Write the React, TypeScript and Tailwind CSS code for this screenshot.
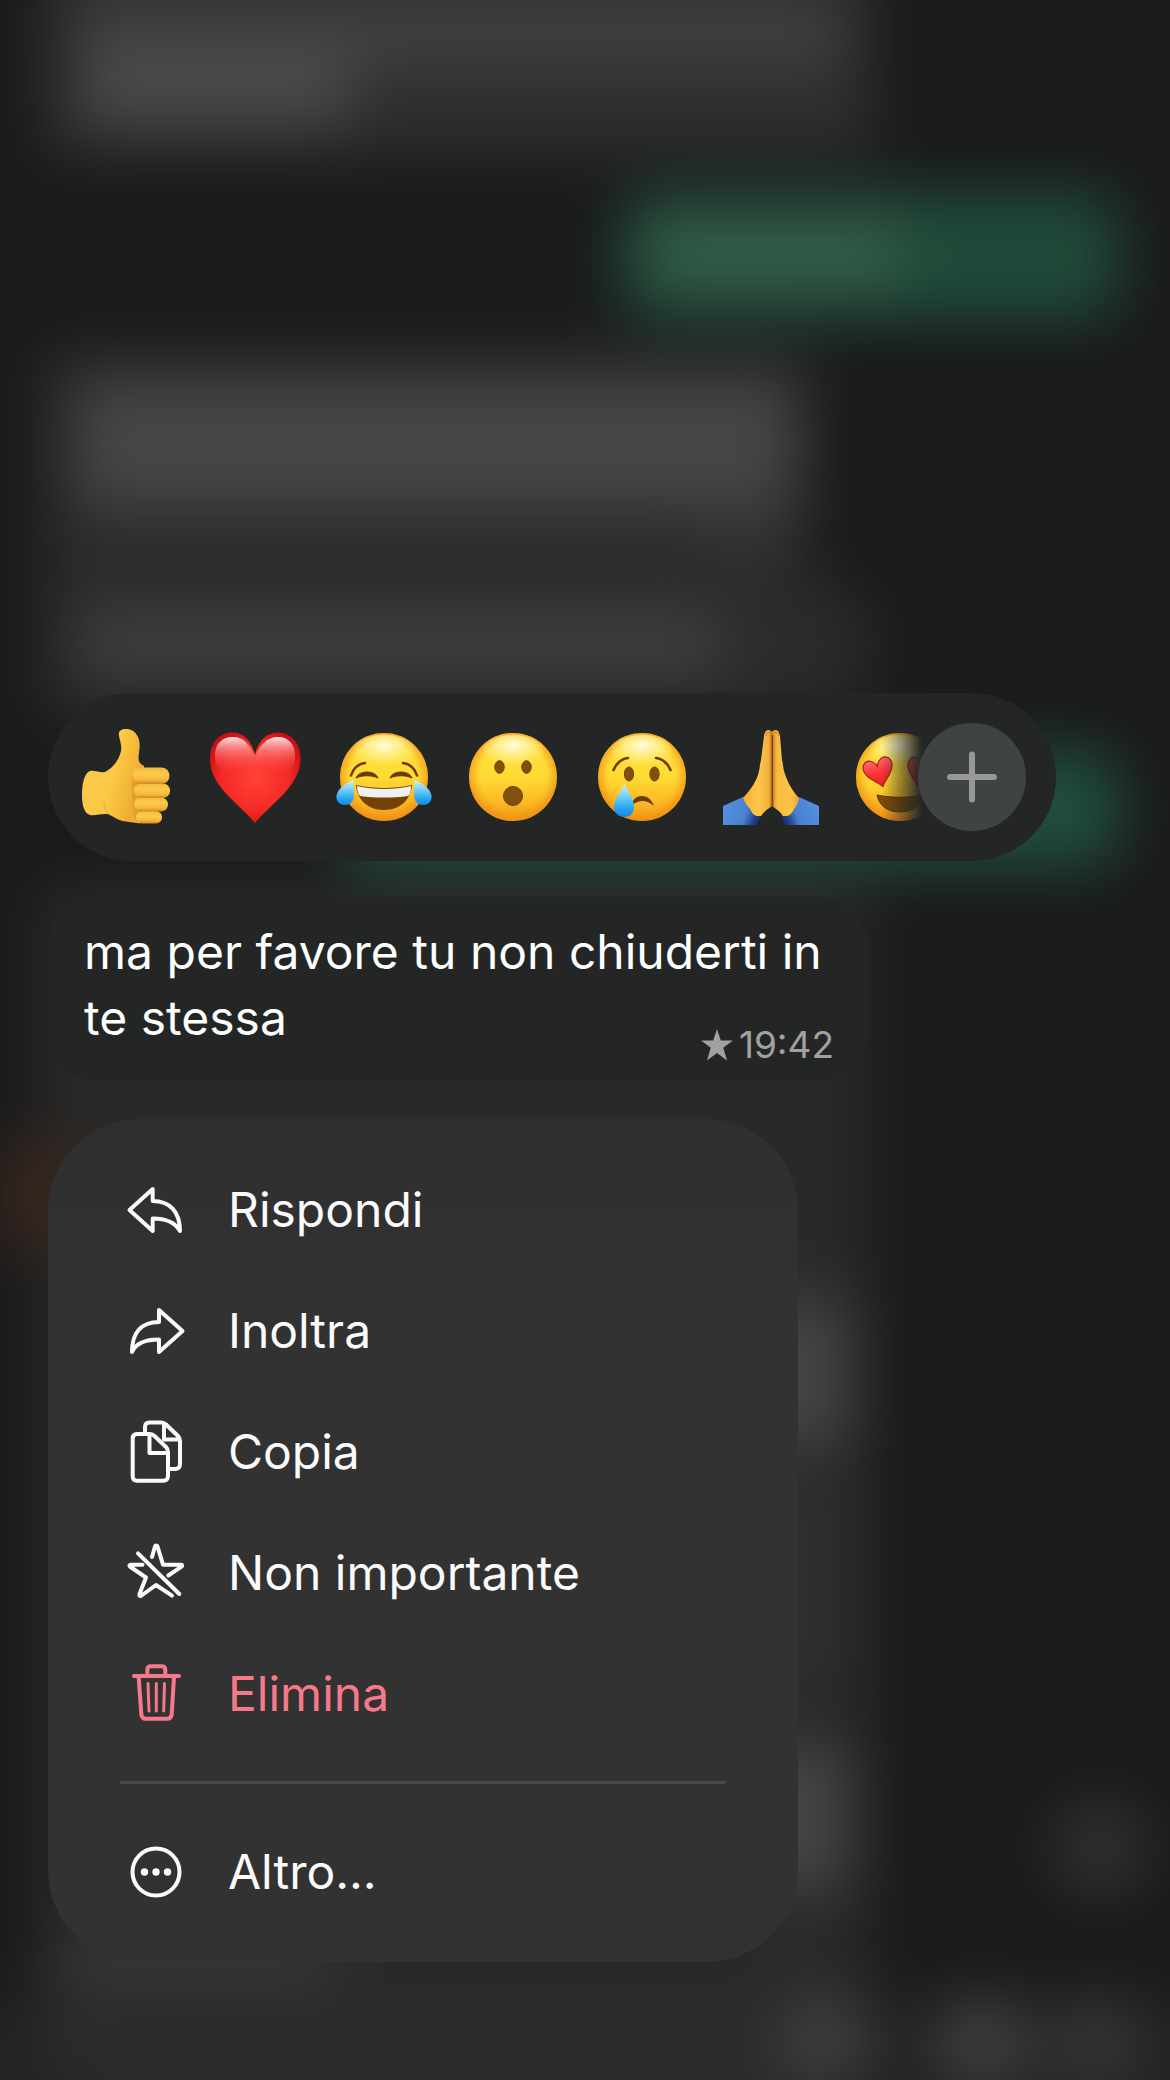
import type { ReactNode } from 'react';

const Face = ({ children }: { children: ReactNode }) => (
  <svg viewBox="0 0 96 96" className="size-24 overflow-visible" aria-hidden="true">
    <circle cx="48" cy="48" r="44" fill="url(#face)" />
    <circle cx="48" cy="48" r="44" fill="url(#faceEdge)" />
    <ellipse cx="48" cy="24" rx="31" ry="18" fill="url(#faceShine)" />
    {children}
  </svg>
);

const ThumbsUp = () => (
  <svg viewBox="0 0 96 96" className="size-24 overflow-visible" aria-hidden="true">
    <path
      d="M48 0C43 0 40 2 41 7C42 12 44 17 43 22C41 31 35 39 27 43C22 44 17 41 12 42C6 44 4 56 4 66C4 76 6 84 12 86C18 87 25 84 31 85.500C36 88 41 92 48 92.500L62 94.500L66 60L66 37C60 34 60 30 61 24C62 18 62 12 60 8C57 2 53 0 48 0Z"
      fill="url(#hand)"
    />
    <path d="M31 85C27 82 26 77 26 72" fill="none" stroke="#e5a32b" strokeWidth="1.500" opacity="0.5" />
    <path d="M55 42C53 54 55 60 54 68C54 76 56 86 58 92L66 92L66 42Z" fill="#dd982b" opacity="0.75" />
    <rect x="58" y="82" width="26" height="12.500" rx="6" fill="url(#finger)" />
    <rect x="56" y="68.500" width="34" height="14" rx="7" fill="url(#finger)" />
    <rect x="56" y="54.500" width="36" height="14.500" rx="7" fill="url(#finger)" />
    <rect x="54.500" y="38.500" width="37" height="16.500" rx="8" fill="url(#finger)" />
  </svg>
);

const Heart = () => (
  <svg viewBox="0 0 96 96" className="size-24 overflow-visible" aria-hidden="true">
    <path d="M48 25C44 11 36 3.500 25.500 3.500C12 3.500 3 14 3 29C3 42 8 51 15 60C25 72 38 82 48 94C58 82 71 72 81 60C88 51 93.500 42 93.500 29C93.500 14 84 3.500 71 3.500C60 3.500 52 11 48 25Z" fill="url(#heart)" />
    <path d="M48 27C43 16 37 8 26 8C14 8 7.500 16 8 28C8.500 36 12 43 18 48C34 42 62 42 78 48C84 43 88 36 88 28C88.500 16 82 8 71 8C60 8 53 16 48 27Z" fill="url(#heartShine)" />
  </svg>
);

const Joy = () => (
  <Face>
    <path d="M15 46.500C17 40 22 35 29 34M81 46.500C79 40 74 35 67 34" fill="none" stroke="#6d3c05" strokeWidth="2.500" strokeLinecap="round" />
    <path d="M20 49C23 41 39 41 42 49C35 46 27 46 20 49ZM54 49C57 41 73 41 76 49C69 46 61 46 54 49Z" fill="#6d3c05" stroke="#6d3c05" strokeLinejoin="round" />
    <path d="M20 56C38 60 58 60 76 56C75 70 65 81 48 81C31 81 21 70 20 56Z" fill="#714106" />
    <path d="M21 57C38 61 58 61 75 57C75 62 74 66 72 67C57 69 39 69 24 67C22 65 21 61 21 57Z" fill="#f1eff0" />
    <path d="M17.500 51C8 55 1 61 .500 67C0 73 4 76 9 76C15 76 18 71 18 65Z" fill="url(#tear)" />
    <path d="M78.500 51C88 55 95 61 95.500 67C96 73 92 76 87 76C81 76 78 71 78 65Z" fill="url(#tear)" />
  </Face>
);

const Surprised = () => (
  <Face>
    <g fill="#81500b" stroke="#6b3e07" strokeWidth="1">
      <ellipse cx="34.500" cy="38" rx="4.700" ry="6.300" />
      <ellipse cx="61.500" cy="38" rx="4.700" ry="6.300" />
      <circle cx="48" cy="67" r="9.500" />
    </g>
  </Face>
);

const Crying = () => (
  <Face>
    <path d="M19.500 41C22 35 27 30 34 29M76.500 41C74 35 69 30 62 29" fill="none" stroke="#6d3c05" strokeWidth="2.600" strokeLinecap="round" />
    <ellipse cx="35" cy="45" rx="4.600" ry="7" fill="#81500b" stroke="#6b3e07" />
    <ellipse cx="60.500" cy="45" rx="4.600" ry="7" fill="#81500b" stroke="#6b3e07" />
    <path d="M38 76C39 65 55 63 60 77C53 71 46 70 38 76Z" fill="#6d3c05" />
    <path d="M30.500 54C34 64 40 69 40 78C40 84 36 88 30.500 88C25 88 20 84 20 78C20 69 27 64 30.500 54Z" fill="url(#tear)" />
  </Face>
);

const Pray = () => (
  <svg viewBox="0 0 96 96" className="size-24 overflow-visible" aria-hidden="true">
    <path d="M0 77L20 68L38 86L33 96H0Z" fill="url(#sleeveLeft)" />
    <path d="M96 77L76 68L58 86L63 96H96Z" fill="url(#sleeveRight)" />
    <path d="M20 69C28 60 34 52 36 42C37 38 37 34 38 31L41 7C42 0 47 0 49 3L49 77C45 80 41 82 38 87C33 87 30 87 27 80C24 77 22 73 20 69Z" fill="url(#palmLeft)" />
    <path d="M76 69C68 60 64 52 61 42C60 38 60 34 59 31L57 7C56 0 51 0 49 3L49 77C53 80 57 82 60 87C65 87 68 87 71 80C74 77 75 73 76 69Z" fill="url(#palmRight)" />
    <path d="M49.500 6V77" stroke="#7d4310" strokeWidth="1.500" />
    <path d="M43 7C43 3 46 2 47 5M56 7C55 3 52 2 51.500 5" fill="none" stroke="#c77c1c" strokeWidth="1" />
  </svg>
);

const heartEye =
  'M0-6C-2-12-7-14-10-13C-15-11-16-5-13 0C-10 6-4 9 0 15C4 9 10 6 13 0C16-5 15-11 10-13C7-14 2-12 0-6Z';

const HeartEyes = () => (
  <Face>
    <g fill="url(#eyeHeart)" stroke="#a81f14" strokeWidth="1.200">
      <path d={heartEye} transform="translate(27 43) rotate(-15)" />
      <path d={heartEye} transform="translate(69 43) rotate(15)" />
    </g>
    <path d="M25 66C40 69 56 69 71 66C69 77 60 83 48 83C36 83 27 77 25 66Z" fill="#7d4c07" stroke="#5f3505" />
  </Face>
);

const reactions = [
  { name: 'Mi piace', icon: <ThumbsUp /> },
  { name: 'Cuore', icon: <Heart /> },
  { name: 'Risata', icon: <Joy /> },
  { name: 'Sorpresa', icon: <Surprised /> },
  { name: 'Tristezza', icon: <Crying /> },
  { name: 'Grazie', icon: <Pray /> },
  { name: 'Amore', icon: <HeartEyes /> },
];

const actions = [
  {
    name: 'Rispondi',
    icon: <path d="M9.500 36L32.700 15V27C50 27 60 38 60 57C55 48 46 44.500 32.700 44.500V57Z" />,
  },
  {
    name: 'Inoltra',
    icon: <path d="M62.500 36L39 15V27C21 27 12 38 12 57C16 48 26 44.500 39 44.500V57Z" />,
  },
  {
    name: 'Copia',
    icon: (
      <>
        <path d="M17 18H30C32 18 33 18.500 34.500 20L46 31C47.500 32.500 48 33.500 48 36V60C48 63 46 64.700 43.500 64.700H17C14 64.700 12.700 63 12.700 60V22.500C12.700 19.500 14 18 17 18Z" />
        <path d="M29.500 18.500V37H47.500M25 17V11C25 8 26.500 6.500 29.500 6.500H41C43 6.500 44.500 7 46 8.500L58 20C59.500 21.500 60 22.500 60 25V48C60 51.500 58.500 53 55 53H50M44 7.500V23.500H59" />
      </>
    ),
  },
  {
    name: 'Non importante',
    icon: (
      <path d="M18 16.300L59.300 57M32 20L35 9.500C35.500 8 37 8 37.500 9.500L43 27.700H61C62.500 27.700 62.500 29 61.500 29.700L48.300 38.500M22.500 27.700H11C9 27.700 9 29 10.500 30L26 40.500L19.500 57C19 59 20 59.500 21.500 58.500L36 48L52 58.700" />
    ),
  },
  {
    name: 'Elimina',
    danger: true,
    icon: (
      <>
        <path d="M14 18H59M27.300 18V12C27.300 9.500 28.500 8.300 31 8.300H41.500C44 8.300 45.300 9.500 45.300 12V18M18.700 19L21.300 56C21.500 59 23 60.700 26 60.700H47C50 60.700 51.500 59 51.700 56L54 19" />
        <path d="M28 25.500L29 53M36.300 25.500V53M44.500 25.500L43.700 53" strokeWidth="3" />
      </>
    ),
  },
];

function ActionButton({ name, icon, danger }: { name: string; icon: ReactNode; danger?: boolean }) {
  return (
    <button type="button" className={`flex h-[121px] w-full items-center gap-9 text-left ${danger ? 'text-[#f5798a]' : 'text-[#fafafa]'}`}>
      <svg
        viewBox="0 0 72 72"
        className="size-18 shrink-0"
        fill="none"
        stroke="currentColor"
        strokeWidth="4"
        strokeLinecap="round"
        strokeLinejoin="round"
        aria-hidden="true"
      >
        {icon}
      </svg>
      <span>{name}</span>
    </button>
  );
}

// Gradients shared by all the reaction drawings
const Gradients = () => (
  <svg className="absolute size-0" aria-hidden="true">
    <defs>
      <linearGradient id="face" x1="0" y1="0" x2="0" y2="1">
        <stop offset="0" stopColor="#ffdd45" />
        <stop offset="0.5" stopColor="#ffdb33" />
        <stop offset="0.78" stopColor="#fcba25" />
        <stop offset="1" stopColor="#f09a1a" />
      </linearGradient>
      <radialGradient id="faceEdge" cx="0.5" cy="0.48" r="0.52">
        <stop offset="0.72" stopColor="#f6a31a" stopOpacity="0" />
        <stop offset="1" stopColor="#ee8b10" stopOpacity="0.85" />
      </radialGradient>
      <radialGradient id="faceShine" cx="0.5" cy="0.3" r="0.6">
        <stop offset="0" stopColor="#fffde8" stopOpacity="0.95" />
        <stop offset="0.5" stopColor="#fff8a8" stopOpacity="0.6" />
        <stop offset="1" stopColor="#fff06a" stopOpacity="0" />
      </radialGradient>
      <linearGradient id="hand" x1="0" y1="0" x2="1" y2="0.4">
        <stop offset="0" stopColor="#e7a83a" />
        <stop offset="0.12" stopColor="#fbc94c" />
        <stop offset="0.6" stopColor="#fbc944" />
        <stop offset="1" stopColor="#eeac32" />
      </linearGradient>
      <linearGradient id="finger" x1="0" y1="0" x2="0" y2="1">
        <stop offset="0" stopColor="#f4b93b" />
        <stop offset="0.4" stopColor="#fccb49" />
        <stop offset="0.75" stopColor="#f6b93a" />
        <stop offset="1" stopColor="#cf8823" />
      </linearGradient>
      <radialGradient id="heart" cx="0.5" cy="0.5" r="0.6">
        <stop offset="0" stopColor="#ff4336" />
        <stop offset="0.6" stopColor="#f52a27" />
        <stop offset="0.85" stopColor="#d9161a" />
        <stop offset="1" stopColor="#bd1016" />
      </radialGradient>
      <linearGradient id="heartShine" x1="0" y1="0" x2="0" y2="1">
        <stop offset="0" stopColor="#ffe3e3" />
        <stop offset="0.3" stopColor="#ff9c9c" stopOpacity="0.7" />
        <stop offset="0.9" stopColor="#ff4a40" stopOpacity="0" />
      </linearGradient>
      <linearGradient id="eyeHeart" x1="0" y1="0" x2="0" y2="1">
        <stop offset="0" stopColor="#ff6a6e" />
        <stop offset="0.5" stopColor="#fb3338" />
        <stop offset="1" stopColor="#e01f24" />
      </linearGradient>
      <linearGradient id="tear" x1="0" y1="0" x2="0" y2="1">
        <stop offset="0" stopColor="#d4f3fb" />
        <stop offset="0.35" stopColor="#7dd6f7" />
        <stop offset="0.75" stopColor="#25a4f5" />
        <stop offset="1" stopColor="#1787e0" />
      </linearGradient>
      <linearGradient id="palmLeft" x1="0" y1="0" x2="1" y2="0">
        <stop offset="0" stopColor="#f7ae35" />
        <stop offset="0.55" stopColor="#fcc64a" />
        <stop offset="0.88" stopColor="#f4b13b" />
        <stop offset="1" stopColor="#bd7720" />
      </linearGradient>
      <linearGradient id="palmRight" x1="0" y1="0" x2="1" y2="0">
        <stop offset="0" stopColor="#d38b28" />
        <stop offset="0.2" stopColor="#f9bb40" />
        <stop offset="0.7" stopColor="#fcc349" />
        <stop offset="1" stopColor="#f2a42c" />
      </linearGradient>
      <linearGradient id="sleeveLeft" x1="0" y1="0" x2="1" y2="0.3">
        <stop offset="0" stopColor="#5594e0" />
        <stop offset="0.72" stopColor="#4a80d0" />
        <stop offset="1" stopColor="#1c3a80" />
      </linearGradient>
      <linearGradient id="sleeveRight" x1="1" y1="0" x2="0" y2="0.3">
        <stop offset="0" stopColor="#5594e0" />
        <stop offset="0.72" stopColor="#4a80d0" />
        <stop offset="1" stopColor="#1c3a80" />
      </linearGradient>
    </defs>
  </svg>
);

// The conversation behind the menu, out of focus
const Backdrop = () => (
  <svg viewBox="0 0 1170 2080" preserveAspectRatio="none" className="absolute inset-0 size-full" aria-hidden="true">
    <defs>
      <filter id="soft" x="-20%" y="-20%" width="140%" height="140%" colorInterpolationFilters="sRGB">
        <feGaussianBlur stdDeviation="30" />
      </filter>
    </defs>
    <g filter="url(#soft)">
      <rect x="-200" y="-200" width="1570" height="2480" fill="#1a1a1a" />
      <rect x="44" y="-80" width="830" height="236" fill="#2d2e2e" />
      <rect x="80" y="5" width="760" height="60" fill="#414241" />
      <rect x="80" y="50" width="270" height="75" fill="#494a49" />

      <rect x="620" y="192" width="500" height="128" rx="30" fill="#1f4a39" />
      <rect x="650" y="220" width="250" height="66" fill="#375d4a" />

      <rect x="44" y="350" width="766" height="370" fill="#2a2b2a" />
      <rect x="600" y="590" width="270" height="110" fill="#2a2b2a" />
      <rect x="76" y="380" width="720" height="128" fill="#454645" />
      <rect x="700" y="500" width="90" height="50" fill="#343635" />
      <rect x="76" y="612" width="645" height="62" fill="#3f4140" />

      <rect x="340" y="750" width="780" height="118" rx="30" fill="#204e3d" />
      <rect x="40" y="885" width="830" height="1120" fill="#282928" />
      <rect x="0" y="1140" width="100" height="110" fill="#38261f" />
      <rect x="600" y="1300" width="250" height="145" fill="#434644" />
      <rect x="600" y="1480" width="250" height="200" fill="#2d302f" />
      <rect x="600" y="1745" width="250" height="145" fill="#434644" />

      <rect x="-60" y="2000" width="1290" height="200" fill="#222222" />
      <rect x="60" y="1935" width="270" height="50" fill="#393939" />
      <rect x="80" y="1985" width="720" height="200" fill="#2a2a2a" />
      <circle cx="1100" cy="1848" r="50" fill="#303030" />
      <circle cx="825" cy="2042" r="48" fill="#3f3f3f" />
      <circle cx="982" cy="2042" r="48" fill="#3f3f3f" />
      <circle cx="1096" cy="2042" r="48" fill="#353535" />
      <circle cx="64" cy="2042" r="36" fill="#2c2c2c" />
    </g>
  </svg>
);

export default function App() {
  return (
    <div className="relative isolate min-h-screen overflow-hidden bg-[#1a1a1a] font-['Inter',sans-serif] text-5xl leading-[66px]">
      <div className="absolute inset-0 -z-10">
        <Backdrop />
      </div>
      <Gradients />

      <main className="flex min-h-screen flex-col items-start justify-end px-12 pt-12 pb-[118px]">
        {/* Reactions */}
        <div className="flex h-42 w-full max-w-[1008px] items-center rounded-full bg-[#242625] pr-[30px]">
          <div className="flex min-w-0 flex-1 overflow-hidden py-2 pl-[13px] [mask-image:linear-gradient(to_left,transparent_8px,black_48px)]">
            {reactions.map((reaction) => (
              <button
                key={reaction.name}
                type="button"
                aria-label={reaction.name}
                className="flex w-[129px] shrink-0 items-center justify-center"
              >
                {reaction.icon}
              </button>
            ))}
          </div>
          <button
            type="button"
            aria-label="Altre reazioni"
            className="relative -ml-3 flex size-27 shrink-0 items-center justify-center rounded-full bg-[#3f4443]"
          >
            <svg viewBox="0 0 54 54" className="size-[54px]" stroke="#98989b" strokeWidth="6" strokeLinecap="round" aria-hidden="true">
              <path d="M27 4.500V49.500M5 27H49" />
            </svg>
          </button>
        </div>

        {/* Message */}
        <article className="mt-9 grid w-full max-w-[820px] rounded-[50px] bg-[#242625] pt-[22px] pr-[34px] pb-[30px] pl-9 text-[#fcfefd]">
          <p className="col-start-1 row-start-1">
            ma per favore tu non chiuderti in
            <br />
            te stessa
          </p>
          <div className="col-start-1 row-start-1 -mb-3.5 flex items-center gap-1.5 self-end justify-self-end text-[37px] leading-[40px] text-[#a0a2a1]">
            <svg viewBox="0 0 32 32" className="size-8" fill="currentColor" aria-hidden="true">
              <path d="M16 0L19.800 11.500H32L22.300 18.800L26 31.500L16 24L6 31.500L9.700 18.800L0 11.500H12.200Z" />
            </svg>
            <time>19:42</time>
          </div>
        </article>

        {/* Menu */}
        <nav className="mt-[38px] w-full max-w-[750px] rounded-[92px] bg-linear-to-b from-[#2f2f2f] to-[#323232] to-25% px-18 py-[30px]">
          {actions.map((action) => (
            <ActionButton key={action.name} {...action} />
          ))}
          <hr className="my-[27px] border-t-3 border-[#484848]" />
          <ActionButton
            name="Altro..."
            icon={
              <>
                <circle cx="36" cy="36" r="23.500" />
                <g fill="currentColor" stroke="none">
                  <circle cx="24.500" cy="36" r="3.700" />
                  <circle cx="36" cy="36" r="3.700" />
                  <circle cx="47.500" cy="36" r="3.700" />
                </g>
              </>
            }
          />
        </nav>
      </main>
    </div>
  );
}
